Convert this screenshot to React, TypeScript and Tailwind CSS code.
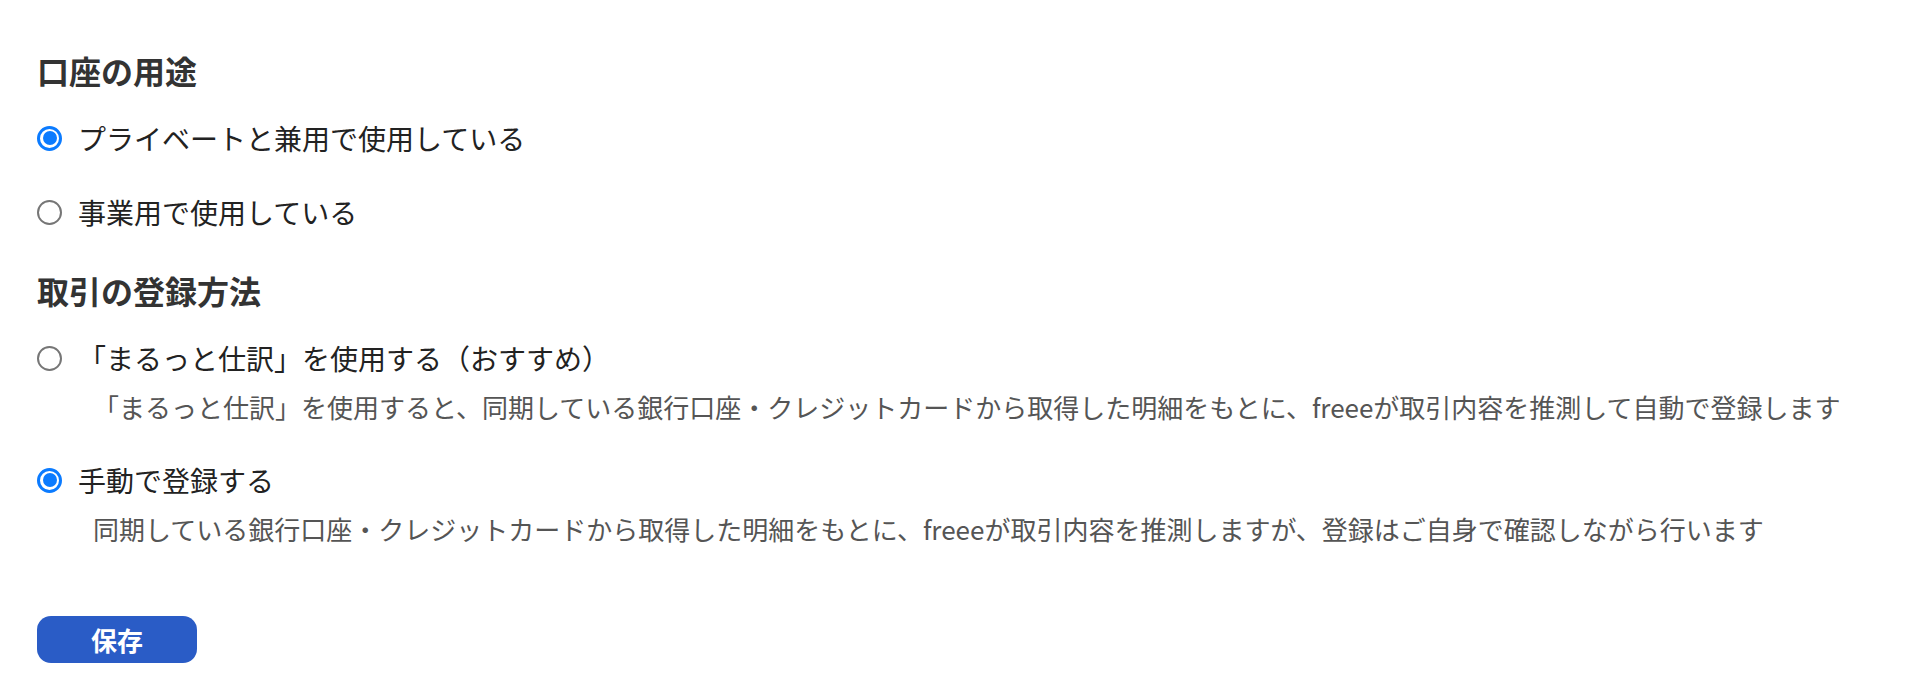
import { useState } from "react";

type Option = { value: string; label: string; note?: string };

const usageOptions: Option[] = [
  { value: "mixed", label: "プライベートと兼用で使用している" },
  { value: "business", label: "事業用で使用している" },
];

const methodOptions: Option[] = [
  {
    value: "auto",
    label: "「まるっと仕訳」を使用する（おすすめ）",
    note: "「まるっと仕訳」を使用すると、同期している銀行口座・クレジットカードから取得した明細をもとに、freeeが取引内容を推測して自動で登録します",
  },
  {
    value: "manual",
    label: "手動で登録する",
    note: "同期している銀行口座・クレジットカードから取得した明細をもとに、freeeが取引内容を推測しますが、登録はご自身で確認しながら行います",
  },
];

function Radio({ checked }: { checked: boolean }) {
  if (checked) {
    return (
      <span className="flex h-[25px] w-[25px] shrink-0 items-center justify-center rounded-full border-[3px] border-[#0b7bff] bg-white">
        <span className="h-[14px] w-[14px] rounded-full bg-[#0b7bff]" />
      </span>
    );
  }
  return <span className="h-[25px] w-[25px] shrink-0 rounded-full border-2 border-[#767676] bg-white" />;
}

function RadioGroup({
  options,
  value,
  onChange,
  gap,
}: {
  options: Option[];
  value: string;
  onChange: (v: string) => void;
  gap: string;
}) {
  return (
    <div className={`flex flex-col ${gap}`}>
      {options.map((opt) => (
        <div key={opt.value}>
          <label className="flex h-[40px] cursor-pointer items-center gap-[16px]" onClick={() => onChange(opt.value)}>
            <Radio checked={value === opt.value} />
            <span className="text-[28px] leading-[40px] text-[#222]">{opt.label}</span>
          </label>
          {opt.note && (
            <p className="mt-[11px] pl-[56px] text-[26px] leading-[36px] text-[#555]">{opt.note}</p>
          )}
        </div>
      ))}
    </div>
  );
}

export default function App() {
  const [usage, setUsage] = useState("mixed");
  const [method, setMethod] = useState("manual");

  return (
    <div
      className="min-h-screen bg-white pl-[37px] pt-[50px]"
      style={{ fontFamily: '"Noto Sans CJK JP", "Noto Sans", sans-serif' }}
    >
      <h2 className="text-[32px] font-bold leading-[40px] text-[#333]">口座の用途</h2>
      <div className="mt-[28px]">
        <RadioGroup options={usageOptions} value={usage} onChange={setUsage} gap="gap-[34px]" />
      </div>

      <h2 className="mt-[38px] text-[32px] font-bold leading-[40px] text-[#333]">取引の登録方法</h2>
      <div className="mt-[28px]">
        <RadioGroup options={methodOptions} value={method} onChange={setMethod} gap="gap-[35px]" />
      </div>

      <button
        type="button"
        className="mt-[69px] h-[47px] w-[160px] rounded-[14px] bg-[#2a5cc6] text-[26px] font-bold text-white"
      >
        保存
      </button>
    </div>
  );
}
